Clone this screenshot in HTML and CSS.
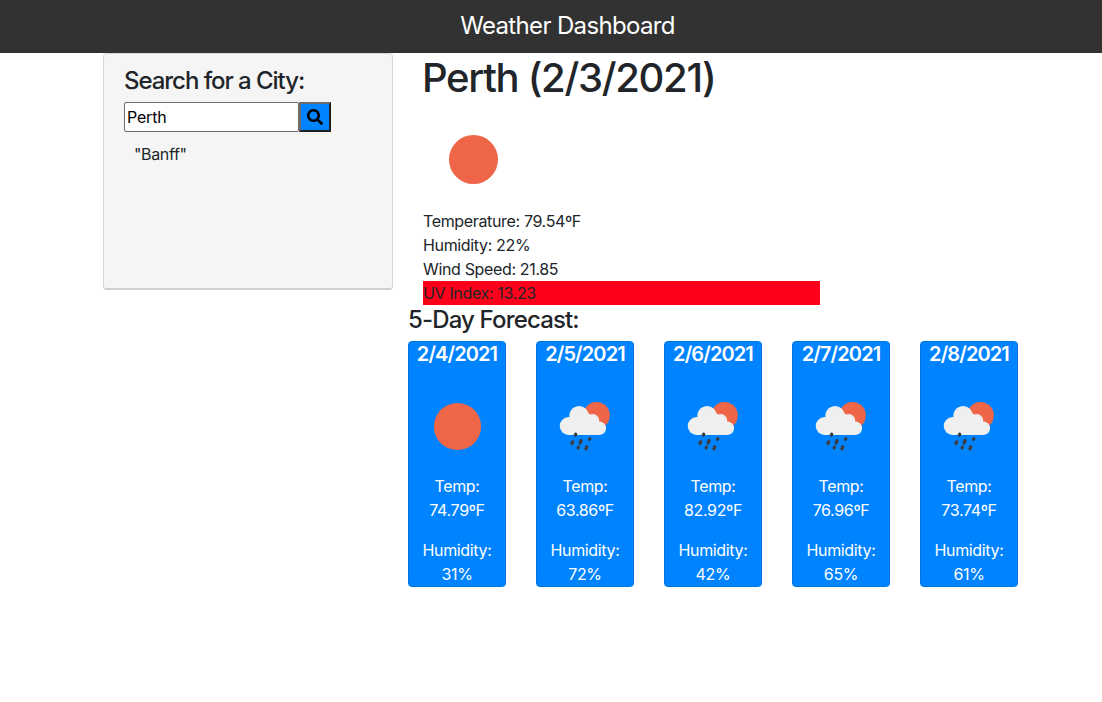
FILE: index.html
```
<!DOCTYPE html>
<html lang="en">
<head>
<meta charset="utf-8">
<title>Weather Dashboard</title>
<link rel="stylesheet" href="styles.css">
</head>
<body>
<svg class="defs" aria-hidden="true">
  <symbol id="sun" viewBox="0 0 98 100"><circle cx="49.500" cy="52.5" r="23.6" fill="#ef6548"/></symbol>
  <symbol id="rain" viewBox="0 0 98 100">
    <circle cx="60.500" cy="41.4" r="13.4" fill="#ef6548"/>
    <g transform="translate(.7 0)">
    <g fill="#efefef">
      <circle cx="32" cy="52" r="9"/><circle cx="42.3" cy="41.7" r="9.7"/>
      <circle cx="55.9" cy="46.8" r="6.7"/><circle cx="62.6" cy="54.2" r="6.8"/>
      <path d="M32 45 48 36 62 48V61H32Z"/>
    </g>
    <g stroke="#3b3b3d" stroke-width="3.2" stroke-linecap="round">
      <path d="M39 60.2 38.6 61M53.2 64.6 52.8 65.4M36 67.8 35.2 69.6M44.4 66.6 43.4 69M41.8 73.2 41.5 73.8M50 72.8 49.2 74.8"/>
    </g>
    </g>
  </symbol>
</svg>
<header class="navbar"><span class="brand">Weather Dashboard</span></header>
<main class="dashboard">
  <aside class="search-card">
    <h4 class="search-title"><span>Search for a City:</span></h4>
    <form class="search-form">
      <input class="search-input" type="text" value="Perth" aria-label="City">
      <button class="search-button" type="button" aria-label="Search">
        <svg class="search-icon" viewBox="0 0 512 512"><path d="M505 442.7 405.3 343c-4.500-4.500-10.600-7-17-7H372c27.600-35.300 44-79.700 44-128C416 93.100 322.900 0 208 0S0 93.100 0 208s93.100 208 208 208c48.300 0 92.700-16.400 128-44v16.300c0 6.400 2.500 12.500 7 17l99.700 99.700c9.400 9.400 24.600 9.400 33.900 0l28.300-28.300c9.400-9.400 9.400-24.600.1-34zM208 336c-70.700 0-128-57.200-128-128 0-70.700 57.200-128 128-128 70.700 0 128 57.200 128 128 0 70.700-57.200 128-128 128z"/></svg>
      </button>
    </form>
    <p class="history">"Banff"</p>
  </aside>
  <section class="results">
    <div class="current">
      <h1 class="city"><span>Perth (2/3/2021)</span></h1>
      <svg class="current-icon" viewBox="0 0 100 100"><circle cx="50.500" cy="50.500" r="24.500" fill="#ef6548"/></svg>
      <p class="stat"><span>Temperature: 79.54ºF</span></p>
      <p class="stat"><span>Humidity: 22%</span></p>
      <p class="stat"><span>Wind Speed: 21.85</span></p>
      <p class="stat uv"><span>UV Index: 13.23</span></p>
    </div>
    <h4 class="forecast-title"><span>5-Day Forecast:</span></h4>
    <div class="forecast">
      <article class="day"><h5 class="date">2/4/2021</h5><svg class="day-icon"><use href="#sun"/></svg><p class="reading">Temp: 74.79ºF</p><p class="reading">Humidity: 31%</p></article>
      <article class="day"><h5 class="date">2/5/2021</h5><svg class="day-icon"><use href="#rain"/></svg><p class="reading">Temp: 63.86ºF</p><p class="reading">Humidity: 72%</p></article>
      <article class="day"><h5 class="date">2/6/2021</h5><svg class="day-icon"><use href="#rain"/></svg><p class="reading">Temp: 82.92ºF</p><p class="reading">Humidity: 42%</p></article>
      <article class="day"><h5 class="date">2/7/2021</h5><svg class="day-icon"><use href="#rain"/></svg><p class="reading">Temp: 76.96ºF</p><p class="reading">Humidity: 65%</p></article>
      <article class="day"><h5 class="date">2/8/2021</h5><svg class="day-icon"><use href="#rain"/></svg><p class="reading">Temp: 73.74ºF</p><p class="reading">Humidity: 61%</p></article>
    </div>
  </section>
</main>
</body>
</html>
```
FILE: styles.css
```
* { box-sizing: border-box; }
body {
  margin: 0;
  background: #fff;
  color: #212529;
  font: 400 16px/24px Inter, "Liberation Sans", sans-serif;
  letter-spacing: -0.35px;
}
h1, h4, h5, p { margin: 0; font-weight: 500; }
p { font-weight: 400; }
.defs { display: none; }
.navbar {
  height: 53px;
  padding: 8px 0 0 33px;
  background: #323232;
  color: #fff;
  font-size: 24px;
  line-height: 36px;
  letter-spacing: -0.65px;
  text-align: center;
}
.dashboard { display: flex; align-items: flex-start; padding-left: 103px; }
.search-card {
  width: 290px;
  height: 237px;
  padding: 12px 20px;
  border: 1px solid #d9d9d9;
  border-bottom: 2px solid #cfcfcf;
  border-radius: 4px;
  background: #f5f5f5;
}
.search-title, .forecast-title { font-size: 24px; line-height: 29px; }
.search-title { letter-spacing: -1.05px; }
.forecast-title { margin-bottom: 7px; letter-spacing: -0.85px; }
.search-form { display: flex; margin-top: 7px; }
.search-input {
  width: 175px;
  height: 30px;
  padding: 1px 2px;
  border: 1px solid #6b6b6b;
  border-radius: 2px;
  background: #fff;
  color: #000;
  font: inherit;
  letter-spacing: -0.2px;
}
.search-button {
  display: flex;
  align-items: center;
  justify-content: center;
  width: 32px;
  height: 30px;
  padding: 0;
  border: 2px solid;
  border-color: #6b6b6b #1b1f24 #1b1f24 #6b6b6b;
  background: #0083ff;
}
.search-icon { width: 16px; height: 16px; fill: #000; }
.history { padding: 10px; }
.results { margin-left: 15px; }
.current { width: 412px; padding-left: 15px; }
.city { padding-top: 1px; margin-bottom: 7px; font-size: 40px; line-height: 48px; letter-spacing: -1.3px; }
.city span { margin-left: -1px; }
.current-icon { display: block; width: 100px; height: 100px; }
.uv { background: #ff001a; }
.forecast { display: flex; gap: 30px; }
.day {
  width: 98px;
  height: 246px;
  border: 1px solid #0074e0;
  border-radius: 4px;
  background: #0083ff;
  color: #fff;
  text-align: center;
}
.date { font-size: 20px; line-height: 24px; font-weight: 600; letter-spacing: -0.9px; }
.day-icon { display: block; width: 98px; height: 100px; margin: 8px 0 0 -1px; }
.reading { padding: 0 12px; margin-bottom: 16px; }
```
